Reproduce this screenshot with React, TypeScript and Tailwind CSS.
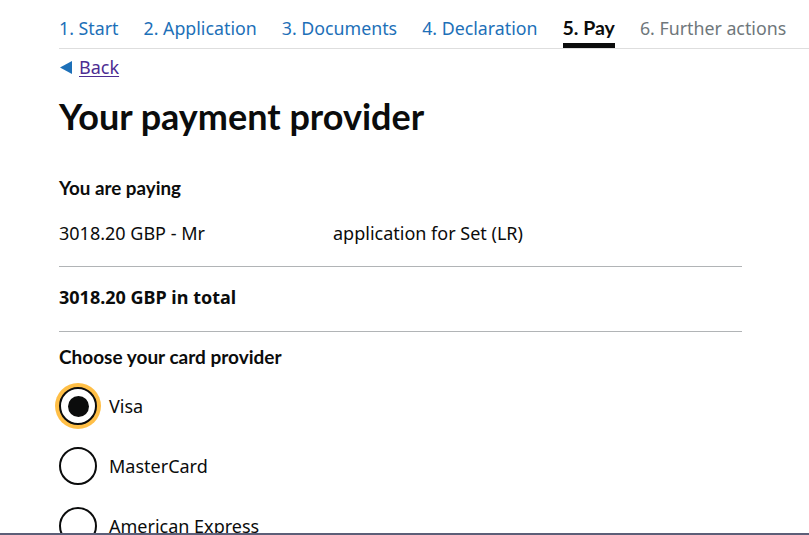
const tabs = [
  { label: "1. Start", state: "link" },
  { label: "2. Application", state: "link" },
  { label: "3. Documents", state: "link" },
  { label: "4. Declaration", state: "link" },
  { label: "5. Pay", state: "active" },
  { label: "6. Further actions", state: "disabled" },
];

const providers = ["Visa", "MasterCard", "American Express"];

export default function App() {
  return (
    <div className="flex h-[535px] flex-col overflow-hidden bg-white font-['Noto_Sans',sans-serif] text-[#0b0c0c]">
      <div className="flex-1 overflow-hidden">
        <nav className="ml-[59px] flex gap-[25px] border-b border-[#dedede]">
          {tabs.map((t) => (
            <div key={t.label} className="flex flex-col pt-[16px]">
              <span
                className={`text-[17.8px] leading-[24px] ${
                  t.state === "active"
                    ? "font-['Lato',sans-serif] text-[19.5px] font-bold text-[#0b0c0c]"
                    : t.state === "disabled"
                      ? "text-[#6f777b]"
                      : "text-[#1d70b8]"
                }`}
              >
                {t.label}
              </span>
              <span
                className={`mt-[3px] h-[5px] ${t.state === "active" ? "bg-[#0b0c0c]" : "bg-transparent"}`}
              />
            </div>
          ))}
        </nav>

        <main className="w-[683px] pl-[59px] box-content">
          <a href="#" className="mt-[6px] flex items-center gap-[7px] text-[18px] leading-[24px]">
            <svg width="12" height="13" viewBox="0 0 12 13" className="ml-[1px]">
              <polygon points="0,6.5 12,0 12,13" fill="#1d70b8" />
            </svg>
            <span className="text-[#4c2c92] underline underline-offset-2">Back</span>
          </a>

          <h1 className="mt-[17px] font-['Lato',sans-serif] text-[36px] font-bold leading-[40px]">
            Your payment provider
          </h1>

          <h2 className="mt-[40px] font-['Lato',sans-serif] text-[18.8px] font-bold leading-[24px]">
            You are paying
          </h2>

          <div className="mt-[21px] grid grid-cols-[274px_1fr] text-[18px] leading-[24px]">
            <span>3018.20 GBP - Mr</span>
            <span>application for Set (LR)</span>
          </div>

          <hr className="mt-[21px] border-t border-[#b1b4b6]" />

          <p className="mt-[18px] text-[18px] font-bold leading-[24px]">3018.20 GBP in total</p>

          <hr className="mt-[22px] border-t border-[#b1b4b6]" />

          <fieldset className="mt-[13px]">
            <legend className="font-['Lato',sans-serif] text-[19px] font-bold leading-[24px]">
              Choose your card provider
            </legend>
            <div className="mt-[18px] flex flex-col gap-[22px]">
              {providers.map((p, i) => (
                <label key={p} className="flex items-center gap-[12px]">
                  <span
                    className={`flex h-[38px] w-[38px] items-center justify-center rounded-full border-[2px] border-[#0b0c0c] bg-white ${
                      i === 0 ? "shadow-[0_0_0_4px_#ffbf47]" : ""
                    }`}
                  >
                    {i === 0 && <span className="h-[21px] w-[21px] rounded-full bg-[#0b0c0c]" />}
                  </span>
                  <span className="text-[18px] leading-[24px]">{p}</span>
                </label>
              ))}
            </div>
          </fieldset>
        </main>
      </div>
      <div className="h-[2px] bg-[#5c5f78]" />
    </div>
  );
}
